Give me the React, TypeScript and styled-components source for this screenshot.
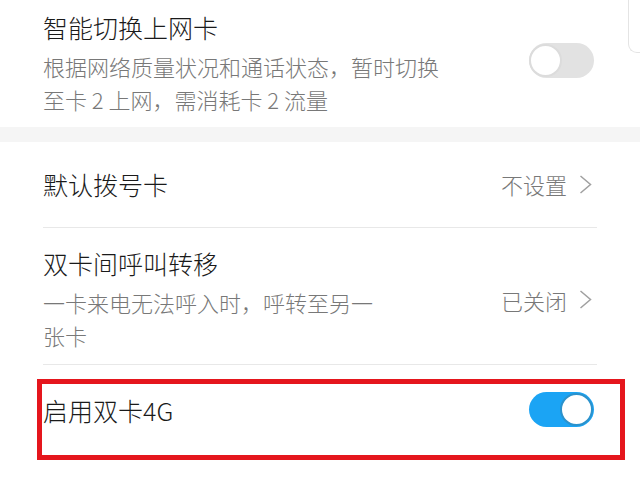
import styled, { createGlobalStyle } from 'styled-components';

const GlobalStyle = createGlobalStyle`
  html, body {
    margin: 0;
    padding: 0;
    background: #ffffff;
  }
  body {
    font-family: "Noto Sans CJK SC", "Noto Sans", sans-serif;
    font-weight: 300;
    color: #1c1c1c;
  }
`;

const Screen = styled.div`
  position: relative;
  width: 640px;
  height: 484px;
  overflow: hidden;
  background: #ffffff;
`;

// faint edge of a floating panel peeking in at the top-right corner
const CornerPanel = styled.div`
  position: absolute;
  top: -2px;
  left: 628px;
  width: 30px;
  height: 54px;
  border-left: 1px solid #e4e4e4;
  border-bottom: 1px solid #e4e4e4;
  border-bottom-left-radius: 9px;
`;

const Group = styled.section`
  background: #ffffff;
  padding: 0 43px;
`;

const GroupGap = styled.div`
  height: 15px;
  background: #f5f5f5;
`;

const Row = styled.div<{ $pt: number; $pb: number; $divider?: boolean }>`
  display: flex;
  align-items: center;
  justify-content: space-between;
  padding: ${({ $pt, $pb }) => `${$pt}px 0 ${$pb}px`};
  border-bottom: ${({ $divider }) => ($divider ? '1.5px solid #e8e8e8' : 'none')};
`;

const TopRow = styled(Row)`
  align-items: flex-start;
`;

const TextCol = styled.div<{ $maxWidth?: number }>`
  display: flex;
  flex-direction: column;
  max-width: ${({ $maxWidth }) => ($maxWidth ? `${$maxWidth}px` : 'none')};
`;

const Title = styled.div`
  font-size: 25px;
  line-height: 32px;
  color: #1a1a1a;
`;

const Desc = styled.div`
  margin-top: 7px;
  font-size: 22px;
  line-height: 33px;
  color: #787878;
`;

const Value = styled.div`
  display: flex;
  align-items: center;
  gap: 12px;
  margin-right: 5px;
  font-size: 22px;
  line-height: 30px;
  color: #787878;
`;

const Switch = styled.div<{ $on?: boolean; $top?: number }>`
  position: relative;
  flex-shrink: 0;
  width: 65px;
  height: 35px;
  margin-right: 3px;
  margin-top: ${({ $top }) => ($top ? `${$top}px` : '0')};
  border-radius: 18px;
  background: ${({ $on }) => ($on ? '#1ba4f4' : '#e2e2e2')};
  box-sizing: border-box;

  &::after {
    content: '';
    position: absolute;
    top: 1px;
    ${({ $on }) => ($on ? 'right: 1px;' : 'left: 0;')}
    width: 33px;
    height: 33px;
    border-radius: 50%;
    box-sizing: border-box;
    background: #ffffff;
    border: 2px solid ${({ $on }) => ($on ? '#2b92cc' : '#dcdcdc')};
  }
`;

const Highlight = styled.div`
  position: relative;

  &::after {
    content: '';
    position: absolute;
    left: -6px;
    top: 14px;
    width: 588px;
    height: 81px;
    border: 5px solid #e5161d;
    box-sizing: border-box;
    pointer-events: none;
  }
`;

const Chevron = () => (
  <svg width="13" height="19" viewBox="0 0 13 19">
    <polyline points="1.5,1 11.5,9.5 1.5,18" fill="none" stroke="#a0a0a0" strokeWidth="1.5" />
  </svg>
);

export default function App() {
  return (
    <>
      <GlobalStyle />
      <Screen>
        <CornerPanel />
        <Group>
          <TopRow $pt={11} $pb={11}>
            <TextCol $maxWidth={410}>
              <Title>智能切换上网卡</Title>
              <Desc>根据网络质量状况和通话状态，暂时切换至卡 2 上网，需消耗卡 2 流量</Desc>
            </TextCol>
            <Switch $top={32} />
          </TopRow>
        </Group>
        <GroupGap />
        <Group>
          <Row $pt={26} $pb={27} $divider>
            <Title>默认拨号卡</Title>
            <Value>
              不设置
              <Chevron />
            </Value>
          </Row>
          <Row $pt={19} $pb={12} $divider>
            <TextCol $maxWidth={345}>
              <Title>双卡间呼叫转移</Title>
              <Desc>一卡来电无法呼入时，呼转至另一张卡</Desc>
            </TextCol>
            <Value>
              已关闭
              <Chevron />
            </Value>
          </Row>
          <Highlight>
            <Row $pt={27} $pb={40}>
              <Title>启用双卡4G</Title>
              <Switch $on />
            </Row>
          </Highlight>
        </Group>
      </Screen>
    </>
  );
}
